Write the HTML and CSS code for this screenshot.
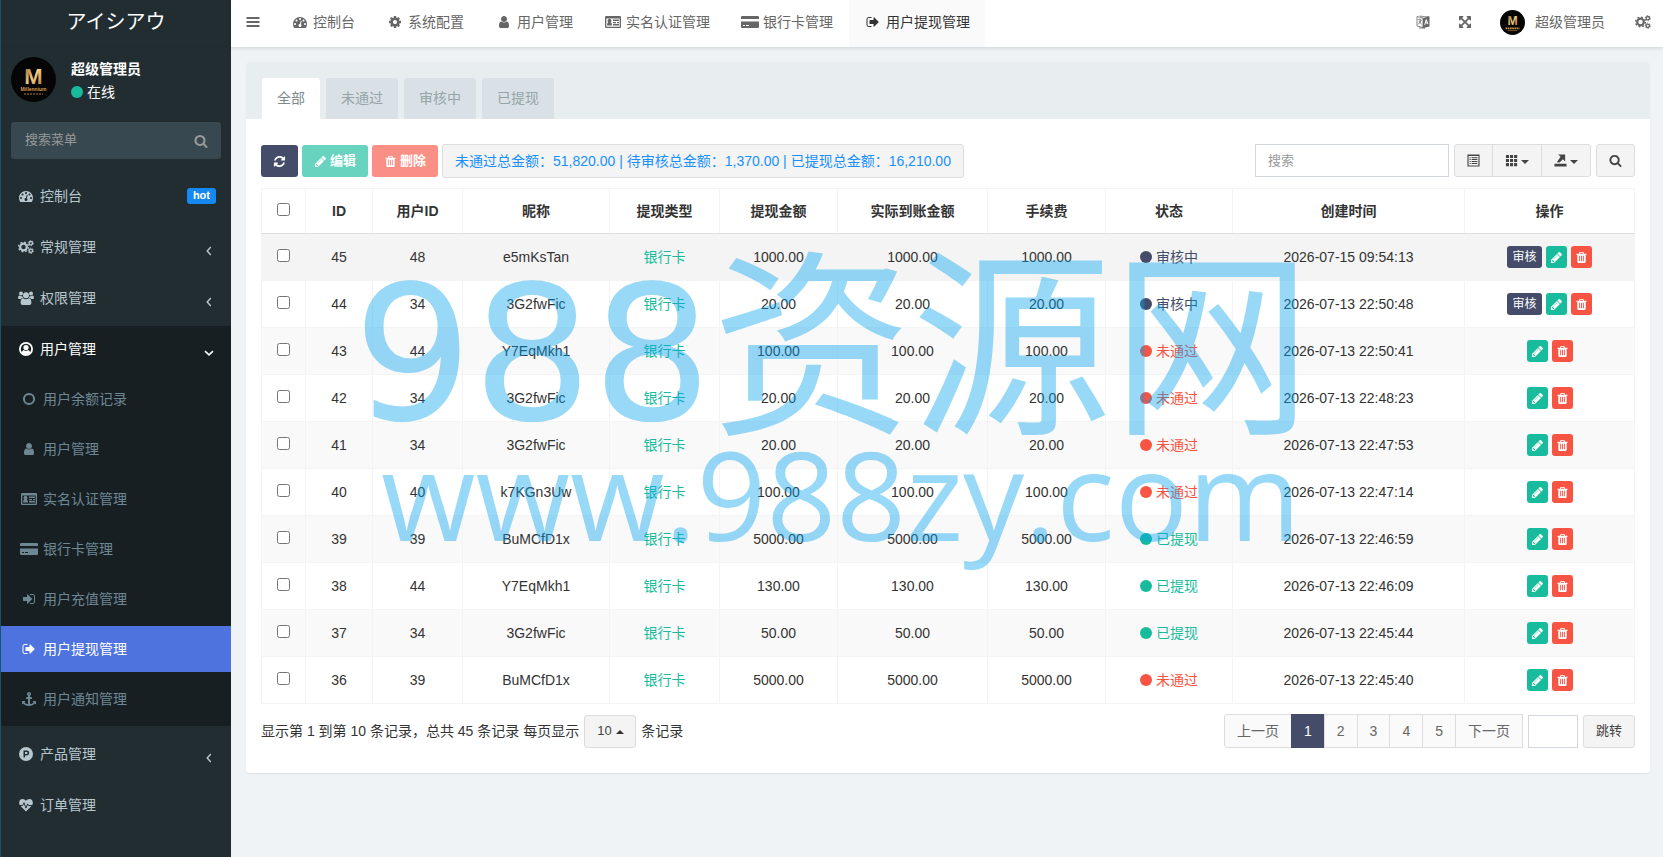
FILE: index.html
```html
<!DOCTYPE html>
<html lang="zh-CN">

<head>
    <meta charset="UTF-8">
    <meta name="viewport" content="width=device-width, initial-scale=1.0">
    <title>用户提现管理</title>
    <link rel="stylesheet" href="styles.css">
</head>

<body>
    <svg class="sprite" aria-hidden="true">
        <linearGradient id="gold" x2="1" y2="1"><stop stop-color="#8a5a22"/><stop offset=".5" stop-color="#f6cf86"/><stop offset="1" stop-color="#a9722f"/></linearGradient>
        <symbol id="dashboard" viewBox="0 0 1792 1792"><path d="M384 1152q0-53-37.5-90.5t-90.5-37.5-90.5 37.5-37.5 90.5 37.5 90.5 90.5 37.5 90.5-37.5 37.5-90.5zm192-448q0-53-37.5-90.5t-90.5-37.5-90.5 37.5-37.5 90.5 37.5 90.5 90.5 37.5 90.5-37.5 37.5-90.5zm428 481l101-382q6-26-7.5-48.5t-38.5-29.5-48 6.5-30 39.5l-101 382q-60 5-107 43.5t-63 98.5q-20 77 20 146t117 89 146-20 89-117q16-60-6-117t-72-91zm660-33q0-53-37.5-90.5t-90.5-37.5-90.5 37.5-37.5 90.5 37.5 90.5 90.5 37.5 90.5-37.5 37.5-90.5zm-640-640q0-53-37.5-90.5t-90.5-37.5-90.5 37.5-37.5 90.5 37.5 90.5 90.5 37.5 90.5-37.5 37.5-90.5zm448 192q0-53-37.5-90.5t-90.5-37.5-90.5 37.5-37.5 90.5 37.5 90.5 90.5 37.5 90.5-37.5 37.5-90.5zm320 448q0 261-141 483-19 29-54 29h-1402q-35 0-54-29-141-221-141-483 0-182 71-348t191-286 286-191 348-71 348 71 286 191 191 286 71 348z"/></symbol>
        <symbol id="cog" viewBox="0 0 1792 1792"><path d="M1152 896q0-106-75-181t-181-75-181 75-75 181 75 181 181 75 181-75 75-181zm512-109v222q0 12-8 23t-20 13l-185 28q-19 54-39 91 35 50 107 138 10 12 10 25t-9 23q-27 37-99 108t-94 71q-12 0-26-9l-138-108q-44 23-91 38-16 136-29 186-7 28-36 28h-222q-14 0-24.5-8.5t-11.5-21.5l-28-184q-49-16-90-37l-141 107q-10 9-25 9-14 0-25-11-126-114-165-168-7-10-7-23 0-12 8-23 15-21 51-66.5t54-70.5q-27-50-41-99l-183-27q-13-2-21-12.5t-8-23.5v-222q0-12 8-23t19-13l186-28q14-46 39-92-40-57-107-138-10-12-10-24 0-10 9-23 26-36 98.5-107.5t94.5-71.5q13 0 26 10l138 107q44-23 91-38 16-136 29-186 7-28 36-28h222q14 0 24.5 8.5t11.5 21.5l28 184q49 16 90 37l142-107q9-9 24-9 13 0 25 10 129 119 165 170 7 8 7 22 0 12-8 23-15 21-51 66.5t-54 70.5q26 50 41 98l183 28q13 2 21 12.5t8 23.5z"/></symbol>
        <symbol id="cogs" viewBox="0 0 16 14"><g fill="none" stroke="currentColor"><circle cx="5.5" cy="7" r="3.3" stroke-width="2.2"/><circle cx="5.5" cy="7" r="4.9" stroke-width="1.3" stroke-dasharray="1.9 1.95"/><circle cx="12.8" cy="3.2" r="1.7" stroke-width="1.4"/><circle cx="12.8" cy="3.2" r="2.6" stroke-width=".9" stroke-dasharray="1.3 1.42"/><circle cx="12.8" cy="10.8" r="1.7" stroke-width="1.4"/><circle cx="12.8" cy="10.8" r="2.6" stroke-width=".9" stroke-dasharray="1.3 1.42"/></g></symbol>
        <symbol id="users" viewBox="0 0 16 14"><circle cx="3" cy="2.4" r="2"/><circle cx="13" cy="2.4" r="2"/><circle cx="8" cy="4.2" r="3"/><path d="M0 7.2C0 5.6.6 4.6 1.5 4.5Q3 5.5 4.3 4.9Q4.5 6.3 5.3 7H3.8L3 8H1.4Q0 8 0 7.2ZM16 7.2C16 5.6 15.4 4.6 14.5 4.5Q13 5.5 11.7 4.9Q11.5 6.3 10.7 7H12.2L13 8H14.6Q16 8 16 7.2ZM2.6 11.7Q2.6 7.5 5.2 7.3Q8 9 10.8 7.3Q13.4 7.5 13.4 11.7Q13.4 14 11.4 14H4.6Q2.6 14 2.6 11.7Z"/></symbol>
        <symbol id="user" viewBox="0 0 1792 1792"><path d="M1536 1399q0 109-62.5 187t-150.5 78h-854q-88 0-150.5-78t-62.5-187q0-85 8.5-160.5t31.5-152 58.5-131 94-89 134.5-34.5q131 128 313 128t313-128q76 0 134.5 34.5t94 89 58.5 131 31.5 152 8.5 160.5zm-256-887q0 159-112.5 271.5t-271.5 112.5-271.5-112.5-112.5-271.5 112.5-271.5 271.5-112.5 271.5 112.5 112.5 271.5z"/></symbol>
        <symbol id="user-circle" viewBox="0 0 14 14"><circle cx="7" cy="7" r="6.1" fill="none" stroke="currentColor" stroke-width="1.8"/><circle cx="7" cy="5.6" r="2.6"/><path d="M2.6 11.2Q3 8.3 4.8 8.1Q7 9.8 9.2 8.1Q11 8.3 11.4 11.2Q9.5 13 7 13T2.6 11.2Z"/></symbol>
        <symbol id="circle-o" viewBox="0 0 14 14"><circle cx="7" cy="7" r="5.1" fill="none" stroke="currentColor" stroke-width="2"/></symbol>
        <symbol id="id-card" viewBox="0 0 16 14"><path fill-rule="evenodd" d="M1.2 1H14.8Q16 1 16 2.2V11.8Q16 13 14.8 13H1.2Q0 13 0 11.8V2.2Q0 1 1.2 1ZM1.3 3.4V11.7H14.7V3.4ZM2 10.5Q2 7.6 3.3 7.5A2 2 0 1 1 5.7 7.5Q7 7.6 7 10.5ZM8 4.6H14V6H8ZM8 6.9H11V8.2H8ZM12 6.9H14V8.2H12ZM8 9.1H14V10.5H8Z"/></symbol>
        <symbol id="credit-card" viewBox="0 0 18 14"><path fill-rule="evenodd" d="M0 4V2.3Q0 1 1.3 1H16.7Q18 1 18 2.3V4ZM0 6.5H18V11.7Q18 13 16.7 13H1.3Q0 13 0 11.7ZM2 10V11H4V10ZM5 10V11H8V10Z"/></symbol>
        <symbol id="sign-in" viewBox="0 0 1792 1792"><path d="M1312 896q0 26-19 45l-544 544q-19 19-45 19t-45-19-19-45v-288h-448q-26 0-45-19t-19-45v-384q0-26 19-45t45-19h448v-288q0-26 19-45t45-19 45 19l544 544q19 19 19 45zm352-352v704q0 119-84.5 203.5t-203.5 84.5h-320q-13 0-22.5-9.5t-9.5-22.5q0-4-1-20t-.5-26.5 3-23.5 10-19.5 20.5-6.5h320q66 0 113-47t47-113v-704q0-66-47-113t-113-47h-312l-11.5-1-11.5-3-8-5.5-7-9-2-13.5q0-4-1-20t-.5-26.5 3-23.5 10-19.5 20.5-6.5h320q119 0 203.5 84.5t84.5 203.5z"/></symbol>
        <symbol id="sign-out" viewBox="0 0 1792 1792"><path d="M704 1440q0 4 1 20t.5 26.5-3 23.5-10 19.5-20.5 6.5h-320q-119 0-203.5-84.5t-84.5-203.5v-704q0-119 84.5-203.5t203.5-84.5h320q13 0 22.5 9.5t9.5 22.5q0 4 1 20t.5 26.5-3 23.5-10 19.5-20.5 6.5h-320q-66 0-113 47t-47 113v704q0 66 47 113t113 47h312l11.5 1 11.5 3 8 5.5 7 9 2 13.5zm928-544q0 26-19 45l-544 544q-19 19-45 19t-45-19-19-45v-288h-448q-26 0-45-19t-19-45v-384q0-26 19-45t45-19h448v-288q0-26 19-45t45-19 45 19l544 544q19 19 19 45z"/></symbol>
        <symbol id="anchor" viewBox="0 0 1792 1792"><path d="M960 256q0-26-19-45t-45-19-45 19-19 45 19 45 45 19 45-19 19-45zm832 928v352q0 22-20 30-8 2-12 2-12 0-23-9l-93-93q-119 143-318.5 226.5t-429.5 83.5-429.5-83.5-318.5-226.5l-93 93q-9 9-23 9-4 0-12-2-20-8-20-30v-352q0-14 9-23t23-9h352q22 0 30 20 8 19-7 35l-100 100q67 91 189.5 153.5t271.5 82.5v-647h-192q-26 0-45-19t-19-45v-128q0-26 19-45t45-19h192v-163q-58-34-93-92.5t-35-128.5q0-106 75-181t181-75 181 75 75 181q0 70-35 128.5t-93 92.5v163h192q26 0 45 19t19 45v128q0 26-19 45t-45 19h-192v647q149-20 271.5-82.5t189.5-153.5l-100-100q-15-16-7-35 8-20 30-20h352q14 0 23 9t9 23z"/></symbol>
        <symbol id="product-hunt" viewBox="0 0 14 14"><path fill-rule="evenodd" d="M7 0A7 7 0 1 1 7 14A7 7 0 0 1 7 0ZM4.5 3.5V10.5H6V8.4H7.8A2.4 2.4 0 0 0 7.8 3.5ZM6 5V6.9H7.7A.95.95 0 0 0 7.7 5Z"/></symbol>
        <symbol id="heartbeat" viewBox="0 0 14 14"><path d="M7 13.5L.8 7.3C-.6 4.5.3 1 3.7 1Q5.6 1 7 2.7Q8.4 1 10.3 1C13.7 1 14.6 4.5 13.2 7.3Z"/><path class="pulse" d="M0 7.5H3.7L5 4.7L7 10.2L8.6 5.9L9.5 7.5H14" fill="none" stroke-width="1"/></symbol>
        <symbol id="language" viewBox="0 0 14 14"><path d="M1 1.5L7 3V12.5L1 11Z" fill="none" stroke="currentColor" stroke-width=".8"/><path fill="none" stroke="currentColor" stroke-width=".8" d="M2.2 4.5L5.8 5.3M4 3.5V5.2M5 5.3Q4.5 8 2.2 9M3 6Q4 8.2 5.8 9.3M3.5 1L9.5 1.8L13 1.5M3 13H9L7 12.5"/><path fill-rule="evenodd" d="M7 3L13.5 1.5V11.5L7 13ZM9.7 4.6L8.2 10L9.2 9.8L9.6 8.5L11 8.2L11.4 9.3L12.4 9.1L10.8 4.4ZM10.2 6L10.7 7.4L9.9 7.5Z"/></symbol>
        <symbol id="arrows" viewBox="0 0 1792 1792"><path d="M1411 541l-355 355 355 355 144-144q29-31 70-14 39 17 39 59v448q0 26-19 45t-45 19h-448q-42 0-59-40-17-39 14-69l144-144-355-355-355 355 144 144q31 30 14 69-17 40-59 40h-448q-26 0-45-19t-19-45v-448q0-42 40-59 39-17 69 14l144 144 355-355-355-355-144 144q-19 19-45 19-12 0-24-5-40-17-40-59v-448q0-26 19-45t45-19h448q42 0 59 40 17 39-14 69l-144 144 355 355 355-355-144-144q-31-30-14-69 17-40 59-40h448q26 0 45 19t19 45v448q0 42-39 59-13 5-25 5-26 0-45-19z"/></symbol>
        <symbol id="bars" viewBox="0 0 14 14"><path d="M.5 2H13.5V4H.5ZM.5 6H13.5V8H.5ZM.5 10H13.5V12H.5Z"/></symbol>
        <symbol id="search" viewBox="0 0 1792 1792"><path d="M1216 832q0-185-131.5-316.5t-316.5-131.5-316.5 131.5-131.5 316.5 131.5 316.5 316.5 131.5 316.5-131.5 131.5-316.5zm512 832q0 52-38 90t-90 38q-54 0-90-38l-343-342q-179 124-399 124-143 0-273.5-55.5t-225-150-150-225-55.5-273.5 55.5-273.5 150-225 225-150 273.5-55.5 273.5 55.5 225 150 150 225 55.5 273.5q0 220-124 399l343 343q37 37 37 90z"/></symbol>
        <symbol id="refresh" viewBox="0 0 1792 1792"><path d="M1639 1056q0 5-1 7-64 268-268 434.5t-478 166.5q-146 0-282.5-55t-243.5-157l-129 129q-19 19-45 19t-45-19-19-45v-448q0-26 19-45t45-19h448q26 0 45 19t19 45-19 45l-137 137q71 66 161 102t187 36q134 0 250-65t186-179q11-17 53-117 8-23 30-23h192q13 0 22.5 9.5t9.5 22.5zm25-800v448q0 26-19 45t-45 19h-448q-26 0-45-19t-19-45 19-45l138-138q-148-137-349-137-134 0-250 65t-186 179q-11 17-53 117-8 23-30 23h-199q-13 0-22.5-9.5t-9.5-22.5v-7q65-268 270-434.5t480-166.5q146 0 284 55.5t245 156.5l130-129q19-19 45-19t45 19 19 45z"/></symbol>
        <symbol id="pencil" viewBox="0 0 1792 1792"><path d="M491 1536l91-91-235-235-91 91v107h128v128h107zm523-928q0-22-22-22-10 0-17 7l-542 542q-7 7-7 17 0 22 22 22 10 0 17-7l542-542q7-7 7-17zm-54-192l416 416-832 832h-416v-416zm683 96q0 53-37 90l-166 166-416-416 166-165q36-38 90-38 53 0 91 38l235 234q37 39 37 91z"/></symbol>
        <symbol id="trash" viewBox="0 0 1792 1792"><path d="M704 1376v-704q0-14-9-23t-23-9h-64q-14 0-23 9t-9 23v704q0 14 9 23t23 9h64q14 0 23-9t9-23zm256 0v-704q0-14-9-23t-23-9h-64q-14 0-23 9t-9 23v704q0 14 9 23t23 9h64q14 0 23-9t9-23zm256 0v-704q0-14-9-23t-23-9h-64q-14 0-23 9t-9 23v704q0 14 9 23t23 9h64q14 0 23-9t9-23zm-544-992h448l-48-117q-7-9-17-11h-317q-10 2-17 11zm928 32v64q0 14-9 23t-23 9h-96v948q0 83-47 143.5t-113 60.5h-832q-66 0-113-58.5t-47-141.5v-952h-96q-14 0-23-9t-9-23v-64q0-14 9-23t23-9h309l70-167q15-37 54-63t79-26h320q40 0 79 26t54 63l70 167h309q14 0 23 9t9 23z"/></symbol>
        <symbol id="list-alt" viewBox="0 0 14 14"><path fill-rule="evenodd" d="M.5.5H13.5V13.5H.5ZM1.7 2.2V12.3H12.3V2.2ZM2.8 3.5H4V4.5H2.8ZM5 3.5H11.2V4.5H5ZM2.8 5.5H4V6.5H2.8ZM5 5.5H11.2V6.5H5ZM2.8 7.5H4V8.5H2.8ZM5 7.5H11.2V8.5H5ZM2.8 9.7H4V10.7H2.8ZM5 9.7H11.2V10.7H5Z"/></symbol>
        <symbol id="th" viewBox="0 0 14 14"><path d="M1 1H4.3V4.3H1ZM5.4 1H8.7V4.3H5.4ZM9.8 1H13.1V4.3H9.8ZM1 5.4H4.3V8.7H1ZM5.4 5.4H8.7V8.7H5.4ZM9.8 5.4H13.1V8.7H9.8ZM1 9.8H4.3V13.1H1ZM5.4 9.8H8.7V13.1H5.4ZM9.8 9.8H13.1V13.1H9.8Z"/></symbol>
        <symbol id="export" viewBox="0 0 14 14"><path d="M.5 10.5H13.5V13.5H.5ZM4.5.5H12V8L9.6 5.7L6 9.2L3 8.8L7.1 3Z"/></symbol>
        <symbol id="angle-left" viewBox="0 0 14 14"><path d="M8.8 3L5.2 7L8.8 11" fill="none" stroke="currentColor" stroke-width="1.4"/></symbol>
        <symbol id="angle-down" viewBox="0 0 14 14"><path d="M3 5.2L7 8.8L11 5.2" fill="none" stroke="currentColor" stroke-width="1.6"/></symbol>
    </svg>

    <aside class="sidebar">
        <a href="#" class="logo">アイシアウ</a>
        <div class="user-panel">
            <svg class="avatar" viewBox="0 0 45 45">
                <circle cx="22.5" cy="22.5" r="22.5" fill="#050505"/>
                <text x="22.5" y="27" text-anchor="middle" font-size="22" font-weight="bold" fill="url(#gold)">M</text>
                <text x="22.5" y="34" text-anchor="middle" font-size="5" font-weight="bold" fill="#d39a4c">Millennium</text>
                <path d="M13 37H32" stroke="#b07a36" stroke-dasharray="2 1"/>
            </svg>
            <div class="user-info">
                <strong>超级管理员</strong>
                <span class="online"><i class="dot success"></i>在线</span>
            </div>
        </div>
        <form class="menu-search">
            <input type="text" placeholder="搜索菜单" aria-label="搜索菜单">
            <button type="button" aria-label="搜索"><svg class="icon"><use href="#search"/></svg></button>
        </form>
        <ul class="menu">
            <li><a href="#"><svg class="icon"><use href="#dashboard"/></svg>控制台<span class="badge">hot</span></a></li>
            <li><a href="#"><svg class="icon wide"><use href="#cogs"/></svg>常规管理<svg class="icon angle"><use href="#angle-left"/></svg></a></li>
            <li><a href="#"><svg class="icon wide"><use href="#users"/></svg>权限管理<svg class="icon angle"><use href="#angle-left"/></svg></a></li>
            <li class="open"><a href="#"><svg class="icon"><use href="#user-circle"/></svg>用户管理<svg class="icon angle"><use href="#angle-down"/></svg></a>
                <ul class="submenu">
                    <li><a href="#"><svg class="icon"><use href="#circle-o"/></svg>用户余额记录</a></li>
                    <li><a href="#"><svg class="icon"><use href="#user"/></svg>用户管理</a></li>
                    <li><a href="#"><svg class="icon wide"><use href="#id-card"/></svg>实名认证管理</a></li>
                    <li><a href="#"><svg class="icon card"><use href="#credit-card"/></svg>银行卡管理</a></li>
                    <li><a href="#"><svg class="icon"><use href="#sign-in"/></svg>用户充值管理</a></li>
                    <li class="active"><a href="#"><svg class="icon"><use href="#sign-out"/></svg>用户提现管理</a></li>
                    <li><a href="#"><svg class="icon"><use href="#anchor"/></svg>用户通知管理</a></li>
                </ul>
            </li>
            <li><a href="#"><svg class="icon"><use href="#product-hunt"/></svg>产品管理<svg class="icon angle"><use href="#angle-left"/></svg></a></li>
            <li><a href="#"><svg class="icon"><use href="#heartbeat"/></svg>订单管理</a></li>
        </ul>
    </aside>

    <div class="wrapper">
        <header class="navbar">
            <button type="button" class="toggle" aria-label="菜单"><svg class="icon"><use href="#bars"/></svg></button>
            <nav class="nav-tabs">
                <a href="#"><svg class="icon"><use href="#dashboard"/></svg>控制台</a>
                <a href="#"><svg class="icon"><use href="#cog"/></svg>系统配置</a>
                <a href="#"><svg class="icon"><use href="#user"/></svg>用户管理</a>
                <a href="#"><svg class="icon wide"><use href="#id-card"/></svg>实名认证管理</a>
                <a href="#"><svg class="icon card"><use href="#credit-card"/></svg>银行卡管理</a>
                <a href="#" class="active"><svg class="icon"><use href="#sign-out"/></svg>用户提现管理</a>
            </nav>
            <div class="nav-right">
                <a href="#" aria-label="语言"><svg class="icon"><use href="#language"/></svg></a>
                <a href="#" aria-label="全屏"><svg class="icon"><use href="#arrows"/></svg></a>
                <a href="#">
                    <svg class="avatar small" viewBox="0 0 45 45">
                        <circle cx="22.5" cy="22.5" r="22.5" fill="#050505"/>
                        <text x="22.5" y="27" text-anchor="middle" font-size="22" font-weight="bold" fill="url(#gold)">M</text>
                        <path d="M10 33H35" stroke="#d39a4c" stroke-width="3" stroke-dasharray="3 1"/>
                        <path d="M14 37H31" stroke="#6d4a20" stroke-width="2"/>
                    </svg>超级管理员</a>
                <a href="#" aria-label="设置"><svg class="icon wide"><use href="#cogs"/></svg></a>
            </div>
        </header>

        <main class="panel">
            <div class="panel-heading">
                <a href="#" class="active">全部</a>
                <a href="#">未通过</a>
                <a href="#">审核中</a>
                <a href="#">已提现</a>
            </div>
            <div class="panel-body">
                <div class="toolbar">
                    <button type="button" class="btn primary" aria-label="刷新"><svg class="icon"><use href="#refresh"/></svg></button>
                    <button type="button" class="btn success disabled"><svg class="icon"><use href="#pencil"/></svg>编辑</button>
                    <button type="button" class="btn danger disabled"><svg class="icon"><use href="#trash"/></svg>删除</button>
                    <a href="#" class="totals">未通过总金额：51,820.00 | 待审核总金额：1,370.00 | 已提现总金额：16,210.00</a>
                    <div class="search-tools">
                        <input type="text" class="form-control search" placeholder="搜索" aria-label="搜索">
                        <div class="btn-group">
                            <button type="button" class="btn default" aria-label="切换"><svg class="icon"><use href="#list-alt"/></svg></button>
                            <button type="button" class="btn default" aria-label="列"><svg class="icon"><use href="#th"/></svg><i class="caret"></i></button>
                            <button type="button" class="btn default" aria-label="导出"><svg class="icon"><use href="#export"/></svg><i class="caret"></i></button>
                        </div>
                        <button type="button" class="btn default" aria-label="普通搜索"><svg class="icon"><use href="#search"/></svg></button>
                    </div>
                </div>

                <div class="table-wrap">
                    <table>
                        <thead>
                            <tr>
                                <th><input type="checkbox" aria-label="全选"></th>
                                <th>ID</th>
                                <th>用户ID</th>
                                <th>昵称</th>
                                <th>提现类型</th>
                                <th>提现金额</th>
                                <th>实际到账金额</th>
                                <th>手续费</th>
                                <th>状态</th>
                                <th>创建时间</th>
                                <th>操作</th>
                            </tr>
                        </thead>
                        <tbody id="rows"></tbody>
                    </table>
                    <div class="watermark">
                        <div class="watermark-name"><span class="digits">988</span>资源网</div>
                        <div class="watermark-url">www.988zy.com</div>
                    </div>
                </div>

                <div class="table-footer">
                    <label class="page-size" for="pageSize">显示第 1 到第 10 条记录，总共 45 条记录 每页显示
                        <span class="select"><select id="pageSize"><option>10</option><option>25</option><option>50</option></select><i class="caret up"></i></span>
                        条记录</label>
                    <div class="pagination">
                        <a href="#">上一页</a>
                        <a href="#" class="active">1</a>
                        <a href="#">2</a>
                        <a href="#">3</a>
                        <a href="#">4</a>
                        <a href="#">5</a>
                        <a href="#">下一页</a>
                    </div>
                    <input type="text" class="form-control jump" aria-label="页码">
                    <button type="button" class="btn default">跳转</button>
                </div>
            </div>
        </main>
    </div>

    <script>
        const status = {
            review: ["primary", "审核中"],
            failed: ["danger", "未通过"],
            paid: ["success", "已提现"]
        };

        // id, user id, nickname, amount, status, created
        const rows = [
            [45, 48, "e5mKsTan", "1000.00", "review", "2026-07-15 09:54:13"],
            [44, 34, "3G2fwFic", "20.00", "review", "2026-07-13 22:50:48"],
            [43, 44, "Y7EqMkh1", "100.00", "failed", "2026-07-13 22:50:41"],
            [42, 34, "3G2fwFic", "20.00", "failed", "2026-07-13 22:48:23"],
            [41, 34, "3G2fwFic", "20.00", "failed", "2026-07-13 22:47:53"],
            [40, 40, "k7KGn3Uw", "100.00", "failed", "2026-07-13 22:47:14"],
            [39, 39, "BuMCfD1x", "5000.00", "paid", "2026-07-13 22:46:59"],
            [38, 44, "Y7EqMkh1", "130.00", "paid", "2026-07-13 22:46:09"],
            [37, 34, "3G2fwFic", "50.00", "paid", "2026-07-13 22:45:44"],
            [36, 39, "BuMCfD1x", "5000.00", "failed", "2026-07-13 22:45:40"]
        ];

        document.getElementById("rows").innerHTML = rows.map(([id, uid, name, amount, state, time]) => {
            const [color, text] = status[state];
            const review = state === "review" ? '<button type="button" class="btn-xs primary">审核</button>' : "";
            return `<tr>
                <td><input type="checkbox" aria-label="${id}"></td>
                <td>${id}</td>
                <td>${uid}</td>
                <td>${name}</td>
                <td><span class="text-success">银行卡</span></td>
                <td>${amount}</td>
                <td>${amount}</td>
                <td>${amount}</td>
                <td><span class="state text-${color}"><i class="dot ${color}"></i>${text}</span></td>
                <td>${time}</td>
                <td><div class="actions">${review}
                    <button type="button" class="btn-xs success" aria-label="编辑"><svg class="icon"><use href="#pencil"/></svg></button>
                    <button type="button" class="btn-xs danger" aria-label="删除"><svg class="icon"><use href="#trash"/></svg></button>
                </div></td>
            </tr>`;
        }).join("");
    </script>
</body>

</html>
```
FILE: styles.css
```css
* {
    box-sizing: border-box;
}

body {
    display: flex;
    min-height: 100vh;
    margin: 0;
    background-color: #eff3f6;
    color: #333;
    font-family: "Liberation Sans", "Noto Sans CJK SC", sans-serif;
    font-size: 14px;
    line-height: 20px;
}

a {
    color: inherit;
    text-decoration: none;
}

ul {
    list-style: none;
    margin: 0;
    padding: 0;
}

button,
input,
select {
    font: inherit;
    margin: 0;
}

button {
    cursor: pointer;
}

.sprite {
    position: absolute;
    width: 0;
    height: 0;
}

.icon {
    width: 14px;
    height: 14px;
    fill: currentColor;
    flex: none;
}

.icon.wide {
    width: 16px;
}

.icon.card {
    width: 18px;
}

.pulse {
    stroke: #222d32;
}

.dot {
    display: inline-block;
    width: 12px;
    height: 12px;
    border-radius: 50%;
}

.primary {
    background-color: #444c69;
}

.success {
    background-color: #18bc9c;
}

.danger {
    background-color: #f75444;
}

.text-primary {
    color: #444c69;
}

.text-success {
    color: #18bc9c;
}

.text-danger {
    color: #f75444;
}

/* sidebar */
.sidebar {
    width: 231px;
    flex: none;
    background-color: #222d32;
    border-left: 1px solid #155570;
    color: #b8c7ce;
}

.logo {
    display: block;
    height: 47px;
    line-height: 44px;
    border-bottom: 1px solid #202a2f;
    color: #fff;
    font-size: 20px;
    text-align: center;
}

.user-panel {
    display: flex;
    gap: 15px;
    padding: 10px;
    color: #fff;
}

.avatar {
    width: 45px;
    height: 45px;
    flex: none;
}

.avatar.small {
    width: 25px;
    height: 25px;
}

.user-info {
    display: flex;
    flex-direction: column;
    gap: 3px;
    padding-top: 2px;
}

.online {
    display: flex;
    align-items: center;
    gap: 4px;
}

.menu-search {
    display: flex;
    margin: 10px 10px 14px;
    background-color: #374850;
    border-radius: 3px;
    color: #999;
}

.menu-search input {
    flex: 1;
    min-width: 0;
    height: 37px;
    padding: 0 14px 2px;
    background: none;
    border: none;
    color: #fff;
    font-size: 13px;
}

::placeholder {
    color: #999;
    opacity: 1;
}

.menu-search button {
    display: flex;
    align-items: center;
    padding: 0 13px;
    background: none;
    border: none;
    color: inherit;
}

.menu a {
    display: flex;
    align-items: center;
    height: 46px;
    padding-left: 18px;
    margin-bottom: 5px;
}

.menu a .icon {
    margin-right: 7px;
}

.menu a .wide {
    margin: 0 6px 0 -1px;
}

.badge {
    margin-left: auto;
    margin-right: 15px;
    padding: 0 6px;
    height: 16px;
    border-radius: 3px;
    background-color: #1688f1;
    color: #fff;
    font-size: 11px;
    font-weight: bold;
    line-height: 15px;
}

.menu a .angle {
    margin: 8px 15px 0 auto;
}

.menu .open {
    display: flow-root;
    margin-bottom: 5px;
    background-color: #181f23;
}

.menu .open > a {
    margin-bottom: 4px;
    color: #fff;
}

.menu .submenu a {
    margin-bottom: 4px;
    padding-left: 21px;
    color: #6d8793;
}

.menu .submenu .icon {
    margin-right: 7px;
}

.menu .submenu .wide {
    margin: 0 6px 0 -1px;
}

.menu .submenu .card {
    margin: 0 5px 0 -2px;
}

.menu .submenu .active a {
    background-color: #4e73df;
    color: #fff;
}

/* top bar */
.wrapper {
    flex: 1;
    min-width: 0;
}

.navbar {
    display: flex;
    height: 47px;
    background-color: #fff;
    box-shadow: 0 1px 4px rgba(0, 21, 41, 0.15);
    color: #666;
}

.toggle {
    display: flex;
    align-items: center;
    width: 45px;
    padding: 0 15px 3px;
    background: none;
    border: none;
    color: inherit;
}

.nav-tabs {
    display: flex;
    gap: 1px;
}

.nav-tabs a,
.nav-right a {
    display: flex;
    align-items: center;
    padding: 0 15px 3px;
}

.nav-tabs .icon {
    margin: 0 6px 0 2px;
}

.nav-tabs .wide {
    margin: 0 5px 0 1px;
}

.nav-tabs .card {
    margin: 0 4px 0 0;
}

.nav-tabs .active {
    background-color: #fafafa;
    color: #333;
}

.nav-right {
    display: flex;
    margin-left: auto;
}

.nav-right a {
    padding: 0 14px 3px;
}

.nav-right .avatar {
    margin-right: 10px;
}

.nav-right a:last-child {
    padding-right: 12px;
    padding-left: 16px;
}

/* panel */
.panel {
    margin: 15px 13px 15px 15px;
    background-color: #fff;
    border-radius: 3px;
    box-shadow: 0 1px 1px rgba(0, 0, 0, 0.08);
}

.panel-heading {
    display: flex;
    gap: 6px;
    padding: 16px 16px 0;
    background-color: #e8edf0;
    border-radius: 3px 3px 0 0;
}

.panel-heading a {
    height: 41px;
    padding: 0 15px;
    background-color: #d9e0e6;
    border-radius: 3px 3px 0 0;
    color: #95a5a6;
    line-height: 41px;
}

.panel-heading .active {
    background-color: #fff;
    color: #7b8a8b;
}

.panel-body {
    padding: 25px 15px;
}

.toolbar {
    display: flex;
    align-items: center;
    gap: 4px;
    margin-bottom: 10px;
}

.btn {
    display: flex;
    align-items: center;
    justify-content: center;
    gap: 3px;
    height: 32px;
    padding: 0 12px;
    border: none;
    border-radius: 3px;
    color: #fff;
    font-size: 13px;
    white-space: nowrap;
}

.btn.disabled {
    opacity: 0.65;
    font-weight: bold;
}

.btn .icon {
    width: 13px;
    height: 13px;
}

.btn.default {
    height: 33px;
    background-color: #f4f4f4;
    border: 1px solid #ddd;
    color: #444;
}

.totals {
    height: 34px;
    padding: 0 12px;
    border: 1px solid #ddd;
    border-radius: 3px;
    background-color: #f4f4f4;
    color: #1890ff;
    line-height: 32px;
    white-space: nowrap;
}

.form-control {
    height: 33px;
    padding: 0 12px;
    border: 1px solid #d2d6de;
    background-color: #fff;
    font-size: 13px;
}

.search-tools {
    display: flex;
    align-self: flex-start;
    gap: 5px;
    margin-left: auto;
}

.search {
    width: 194px;
}

.btn-group {
    display: flex;
}

.btn-group .btn {
    border-radius: 0;
    margin-left: -1px;
}

.btn-group .btn:first-child {
    border-radius: 3px 0 0 3px;
    margin-left: 0;
}

.btn-group .btn:last-child {
    border-radius: 0 3px 3px 0;
}

.caret {
    margin-top: 3px;
    border-top: 4px solid;
    border-right: 4px solid transparent;
    border-left: 4px solid transparent;
}

.table-wrap {
    position: relative;
}

table {
    width: 100%;
    border-collapse: collapse;
    table-layout: fixed;
}

th,
td {
    padding: 0;
    border: 1px solid #f4f4f4;
    text-align: center;
    white-space: nowrap;
}

th {
    height: 45px;
    border-bottom-color: #ddd;
}

td {
    height: 47px;
}

tbody tr:nth-child(odd) {
    background-color: #f9f9f9;
}

tbody tr:first-child {
    background-color: #f4f4f4;
}

th:nth-child(1) { width: 44px; }
th:nth-child(2) { width: 67px; }
th:nth-child(3) { width: 90px; }
th:nth-child(4) { width: 147px; }
th:nth-child(5) { width: 110px; }
th:nth-child(6) { width: 118px; }
th:nth-child(7) { width: 150px; }
th:nth-child(8) { width: 118px; }
th:nth-child(9) { width: 127px; }
th:nth-child(10) { width: 232px; }
th:nth-child(11) { width: 170px; }

.state,
.actions {
    display: flex;
    align-items: center;
    justify-content: center;
    gap: 4px;
}

.btn-xs {
    display: flex;
    align-items: center;
    height: 22px;
    padding: 0 4px;
    border: none;
    border-radius: 3px;
    color: #fff;
    font-size: 12px;
}

.btn-xs.primary {
    padding: 0 5px;
}

.btn-xs .icon {
    width: 13px;
    height: 13px;
}

/* site mark laid over the table */
.watermark {
    position: absolute;
    top: 54px;
    left: 92px;
    color: #00a2f0;
    font-family: "Open Sans", "Noto Sans CJK SC", sans-serif;
    opacity: 0.4;
    pointer-events: none;
    white-space: nowrap;
}

.watermark-name {
    font-size: 200px;
    line-height: 200px;
}

.watermark-name .digits {
    font-family: "DejaVu Sans", sans-serif;
    font-size: 188px;
    line-height: 0;
}

.watermark-url {
    padding-left: 28px;
    font-size: 122px;
    line-height: 104px;
}

.table-footer {
    display: flex;
    align-items: center;
    gap: 5px;
    padding-top: 10px;
}

.page-size {
    display: flex;
    align-items: center;
    gap: 5px;
    margin-right: auto;
}

.select {
    position: relative;
}

.select select {
    display: block;
    width: 52px;
    height: 33px;
    padding: 0 12px;
    appearance: none;
    background-color: #f4f4f4;
    border: 1px solid #ddd;
    border-radius: 3px;
    color: #444;
    font-size: 13px;
}

.select .caret {
    position: absolute;
    top: 12px;
    right: 12px;
}

.caret.up {
    border-top: none;
    border-bottom: 4px solid;
}

.pagination {
    display: flex;
}

.pagination a {
    height: 34px;
    padding: 0 12px;
    margin-left: -1px;
    background-color: #fafafa;
    border: 1px solid #ddd;
    color: #666;
    line-height: 32px;
}

.pagination a:first-child {
    border-radius: 3px 0 0 3px;
}

.pagination .active {
    background-color: #444c69;
    border-color: #444c69;
    color: #fff;
}

.jump {
    width: 50px;
}
```
